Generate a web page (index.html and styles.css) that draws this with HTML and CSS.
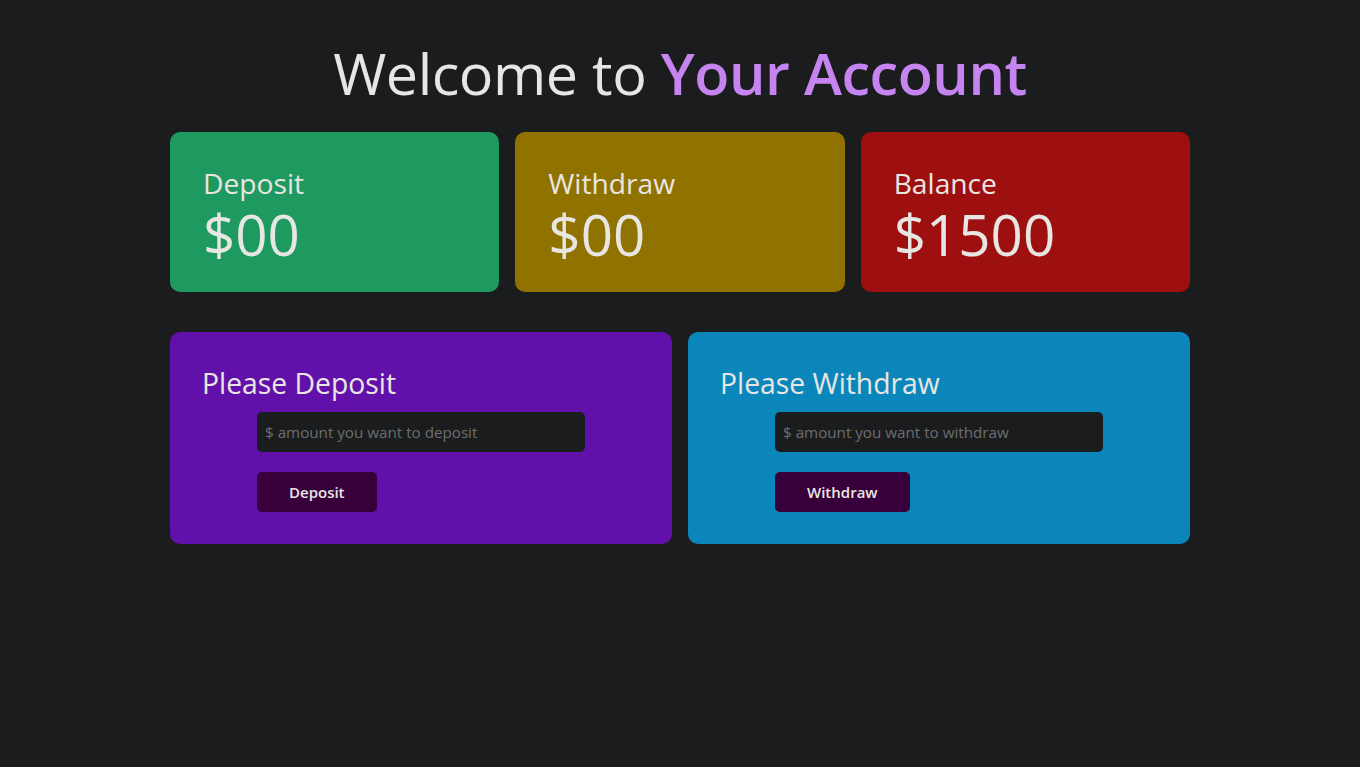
FILE: index.html
```html
<!DOCTYPE html>
<html lang="en">
<head>
<meta charset="utf-8">
<title>Your Account</title>
<link rel="stylesheet" href="styles.css">
</head>
<body>
<main class="page">
  <h1 class="title">Welcome to <span class="accent">Your Account</span></h1>
  <section class="stats">
    <div class="stat stat-deposit">
      <div class="stat-label">Deposit</div>
      <div class="stat-value">$00</div>
    </div>
    <div class="stat stat-withdraw">
      <div class="stat-label">Withdraw</div>
      <div class="stat-value">$00</div>
    </div>
    <div class="stat stat-balance">
      <div class="stat-label">Balance</div>
      <div class="stat-value">$1500</div>
    </div>
  </section>
  <section class="actions">
    <div class="action action-deposit">
      <h2 class="action-title">Please Deposit</h2>
      <form class="action-form">
        <input class="amount" type="text" placeholder="$ amount you want to deposit">
        <button class="btn" type="button">Deposit</button>
      </form>
    </div>
    <div class="action action-withdraw">
      <h2 class="action-title">Please Withdraw</h2>
      <form class="action-form">
        <input class="amount" type="text" placeholder="$ amount you want to withdraw">
        <button class="btn" type="button">Withdraw</button>
      </form>
    </div>
  </section>
</main>
</body>
</html>
```
FILE: styles.css
```css
* { box-sizing: border-box; }
html, body { margin: 0; padding: 0; }
body {
  background: #1b1c1e;
  color: #e8e6e3;
  font-family: "Open Sans", "Noto Sans", sans-serif;
  width: 1360px;
  height: 767px;
}
.page {
  width: 1020px;
  margin: 0 auto;
  padding-top: 34px;
}
.title {
  margin: 0 0 20px;
  text-align: center;
  font-weight: 400;
  font-size: 57.5px;
  line-height: 78px;
  letter-spacing: -0.45px;
}
.accent { color: #c584f0; font-weight: 600; }
.stats {
  display: grid;
  grid-template-columns: 1fr 1fr 1fr;
  gap: 16px;
}
.stat {
  height: 160px;
  border-radius: 10px;
  padding: 35px 33px 0;
}
.stat-deposit { background: #1e9960; }
.stat-withdraw { background: #907200; }
.stat-balance { background: #9e1010; }
.stat-label {
  font-size: 28.2px;
  line-height: 32px;
}
.stat-value {
  margin-top: 8px;
  font-size: 56.5px;
  line-height: 56px;
}
.actions {
  margin-top: 40px;
  display: grid;
  grid-template-columns: 1fr 1fr;
  gap: 16px;
}
.action {
  height: 212px;
  border-radius: 10px;
  padding: 31px 32px;
}
.action-deposit { background: #6111a9; }
.action-withdraw { background: #0b86bb; }
.action-title {
  margin: 0 0 9px;
  font-weight: 400;
  font-size: 28.3px;
  line-height: 40px;
}
.action-form {
  width: 328px;
  margin: 0 auto;
  display: flex;
  flex-direction: column;
  align-items: flex-start;
  gap: 20px;
}
.amount {
  width: 328px;
  height: 40px;
  border: none;
  border-radius: 5px;
  background: #1b1c1e;
  color: #e8e6e3;
  padding: 0 8px;
  font-family: inherit;
  font-size: 15.2px;
  outline: none;
}
.amount::placeholder { color: #6e6e6e; }
.btn {
  height: 40px;
  padding: 0 32px;
  border: none;
  border-radius: 5px;
  background: #38003a;
  color: #e8e6e3;
  font-family: inherit;
  font-weight: 600;
  font-size: 15px;
}
```
